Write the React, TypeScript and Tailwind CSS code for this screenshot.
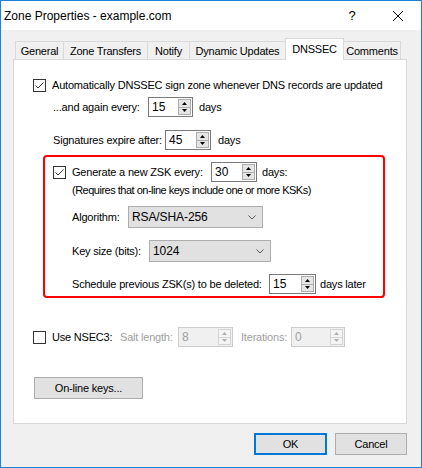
import React from "react";

function Check({ checked }: { checked?: boolean }) {
  return (
    <div className="w-[13px] h-[13px] shrink-0 border border-[#333333] bg-white flex items-center justify-center">
      {checked && (
        <svg width="11" height="11" viewBox="0 0 11 11">
          <path d="M1.5 5.5 L4 8 L9.5 2.5" fill="none" stroke="#333333" strokeWidth="1" />
        </svg>
      )}
    </div>
  );
}

function Arrow({ up, disabled }: { up?: boolean; disabled?: boolean }) {
  return (
    <svg width="5" height="3" viewBox="0 0 5 3">
      <polygon
        points={up ? "0,3 2.5,0 5,3" : "0,0 2.5,3 5,0"}
        fill={disabled ? "#b0b0b0" : "#000000"}
      />
    </svg>
  );
}

function Spinner({ value, w, disabled }: { value: string; w: string; disabled?: boolean }) {
  return (
    <div
      className={`${w} h-[20px] shrink-0 border flex items-stretch ${
        disabled ? "border-[#cccccc] bg-[#f0f0f0] text-[#a0a0a0]" : "border-[#7a7a7a] bg-white text-black"
      }`}
    >
      <div className="flex-1 flex items-center pl-[3px] text-[12px] tracking-normal">{value}</div>
      <div className="w-[13px] flex flex-col py-[1px] mr-[1px]">
        <div
          className={`flex-1 flex items-center justify-center border ${
            disabled ? "border-[#d4d4d4] bg-[#f4f4f4]" : "border-[#adadad] bg-[#e5e5e5]"
          }`}
        >
          <Arrow up disabled={disabled} />
        </div>
        <div
          className={`flex-1 flex items-center justify-center border border-t-0 ${
            disabled ? "border-[#d4d4d4] bg-[#f4f4f4]" : "border-[#adadad] bg-[#e5e5e5]"
          }`}
        >
          <Arrow disabled={disabled} />
        </div>
      </div>
    </div>
  );
}

function Select({ value, w }: { value: string; w: string }) {
  return (
    <div
      className={`${w} h-[22px] shrink-0 border border-[#adadad] bg-[#e1e1e1] flex items-center justify-between pl-[3px] pr-[6px]`}
    >
      <span className="text-[12px] tracking-[-0.1px]">{value}</span>
      <svg width="8" height="5" viewBox="0 0 8 5">
        <path d="M0.5 0.5 L4 4 L7.5 0.5" fill="none" stroke="#555555" strokeWidth="1" />
      </svg>
    </div>
  );
}

function Tab({ label, w, selected, first }: { label: string; w: string; selected?: boolean; first?: boolean }) {
  return (
    <div
      className={`${w} ${first ? "" : "-ml-[1px]"} flex items-center justify-center border border-b-0 border-[#d9d9d9] ${
        selected ? "h-[22px] bg-white -mb-[1px] relative z-10" : "h-[18px] bg-[#f0f0f0] pt-[1px]"
      }`}
    >
      {label}
    </div>
  );
}

export default function App() {
  return (
    <div className="w-[422px] h-[468px] border border-[#1883d7] bg-[#f0f0f0] flex flex-col text-[11px] tracking-[-0.2px] leading-none text-black whitespace-nowrap font-['Liberation_Sans',Arial,sans-serif] overflow-hidden">
      {/* Title bar */}
      <div className="h-[29px] bg-white flex items-center justify-between shrink-0">
        <div className="pl-[3px] text-[12px] tracking-normal">Zone Properties - example.com</div>
        <div className="flex h-full">
          <div className="w-[46px] h-full flex items-center justify-center text-[13px]">?</div>
          <div className="w-[46px] h-full flex items-center justify-center">
            <svg width="10" height="10" viewBox="0 0 10 10">
              <path d="M0 0 L10 10 M10 0 L0 10" stroke="#000000" strokeWidth="1" />
            </svg>
          </div>
        </div>
      </div>

      {/* Body */}
      <div className="flex-1 flex flex-col pt-[8px]">
        {/* Tabs */}
        <div className="flex items-end h-[21px] ml-[14px]">
          <Tab first label="General" w="w-[49px]" />
          <Tab label="Zone Transfers" w="w-[85px]" />
          <Tab label="Notify" w="w-[43px]" />
          <Tab label="Dynamic Updates" w="w-[97px]" />
          <Tab selected label="DNSSEC" w="w-[59px]" />
          <Tab label="Comments" w="w-[58px]" />
        </div>

        {/* Panel */}
        <div className="ml-[12px] w-[394px] h-[365px] border border-[#d9d9d9] bg-white flex flex-col pt-[15px] pl-[19px]">
          <div className="h-[20px] flex items-center">
            <Check checked />
            <span className="ml-[6px]">Automatically DNSSEC sign zone whenever DNS records are updated</span>
          </div>

          <div className="h-[20px] mt-[2px] flex items-center pl-[20px]">
            <span className="w-[95px]">...and again every:</span>
            <Spinner value="15" w="w-[45px]" />
            <span className="ml-[6px]">days</span>
          </div>

          <div className="h-[20px] mt-[13px] flex items-center pl-[20px]">
            <span className="w-[112px]">Signatures expire after:</span>
            <Spinner value="45" w="w-[46px]" />
            <span className="ml-[7px]">days</span>
          </div>

          {/* Highlighted ZSK group */}
          <div className="mt-[5px] ml-[10px] w-[342px] h-[143px] border-2 border-[#ff0000] rounded-[4px] flex flex-col pt-[5px]">
            <div className="h-[20px] flex items-center pl-[8px]">
              <Check checked />
              <span className="ml-[6px] w-[139px]">Generate a new ZSK every:</span>
              <Spinner value="30" w="w-[46px]" />
              <span className="ml-[5px]">days:</span>
            </div>
            <div className="h-[16px] flex items-center pl-[27px] tracking-[-0.5px]">
              (Requires that on-line keys include one or more KSKs)
            </div>
            <div className="mt-[8px] flex items-center pl-[27px]">
              <span className="w-[56px]">Algorithm:</span>
              <Select value="RSA/SHA-256" w="w-[135px]" />
            </div>
            <div className="mt-[12px] flex items-center pl-[27px]">
              <span className="w-[77px]">Key size (bits):</span>
              <Select value="1024" w="w-[122px]" />
            </div>
            <div className="mt-[12px] h-[20px] flex items-center pl-[27px]">
              <span className="w-[197px]">Schedule previous ZSK(s) to be deleted:</span>
              <Spinner value="15" w="w-[47px]" />
              <span className="ml-[4px]">days later</span>
            </div>
          </div>

          <div className="mt-[29px] h-[20px] flex items-center">
            <Check />
            <span className="ml-[6px] w-[68px]">Use NSEC3:</span>
            <span className="w-[58px] text-[#a0a0a0]">Salt length:</span>
            <Spinner disabled value="8" w="w-[55px]" />
            <span className="ml-[8px] w-[50px] text-[#a0a0a0]">Iterations:</span>
            <Spinner disabled value="0" w="w-[54px]" />
          </div>

          <div className="mt-[30px] ml-[1px] w-[109px] h-[22px] border border-[#adadad] bg-[#e1e1e1] flex items-center justify-center">
            On-line keys...
          </div>
        </div>

        {/* Dialog buttons */}
        <div className="mt-[9px] flex justify-end gap-[8px] mr-[14px]">
          <div className="w-[73px] h-[22px] border-2 border-[#0078d7] bg-[#e1e1e1] flex items-center justify-center">
            OK
          </div>
          <div className="w-[72px] h-[22px] border border-[#adadad] bg-[#e1e1e1] flex items-center justify-center">
            Cancel
          </div>
        </div>
      </div>
    </div>
  );
}
